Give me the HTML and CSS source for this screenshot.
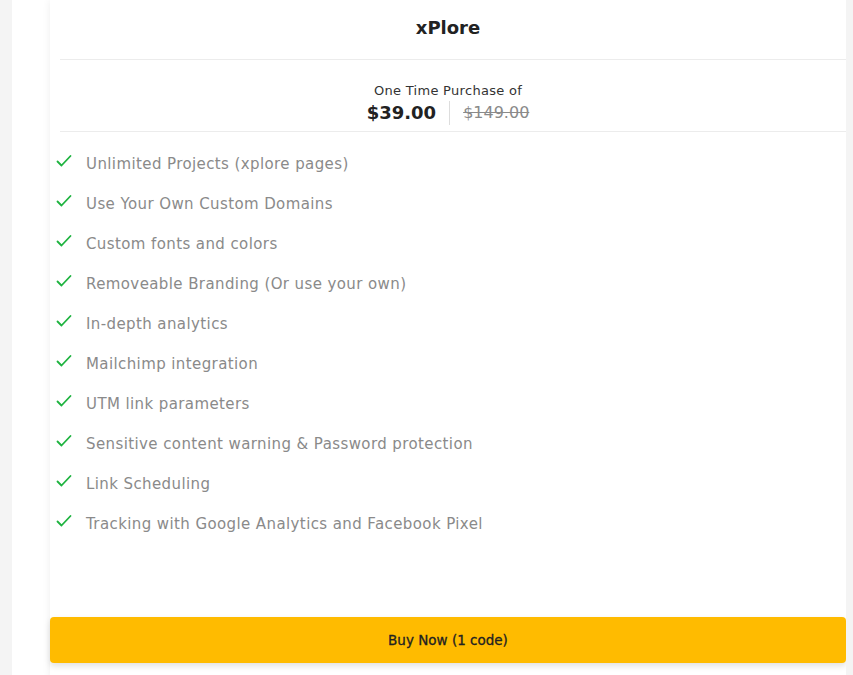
FILE: index.html
```html
<!DOCTYPE html>
<html lang="en">
<head>
  <meta charset="UTF-8" />
  <title>xPlore - Pricing</title>
  <meta name="viewport" content="width=device-width, initial-scale=1.0" />
  <link rel="stylesheet" href="styles.css">
</head>
<body>
  <div class="page">
    <div class="card">
      <h2 class="plan-title">xPlore</h2>
      <div class="price-box">
        <div class="price-label">One Time Purchase of</div>
        <div class="price-row">
          <span class="price">$39.00</span>
          <span class="old-price">$149.00</span>
        </div>
      </div>
      <ul class="features" id="features"></ul>
      <button class="buy">Buy Now (1 code)</button>
    </div>
  </div>

  <script>
    const features = [
      "Unlimited Projects (xplore pages)",
      "Use Your Own Custom Domains",
      "Custom fonts and colors",
      "Removeable Branding (Or use your own)",
      "In-depth analytics",
      "Mailchimp integration",
      "UTM link parameters",
      "Sensitive content warning & Password protection",
      "Link Scheduling",
      "Tracking with Google Analytics and Facebook Pixel"
    ];

    const listEl = document.getElementById("features");
    const check = '<svg class="check" viewBox="0 0 16 16" width="16" height="16"><polyline points="1.5,8.5 5.5,12.5 14.5,3" fill="none" stroke="#1db33f" stroke-width="1.8" stroke-linecap="round" stroke-linejoin="round"/></svg>';

    features.forEach(text => {
      const li = document.createElement("li");
      li.innerHTML = check + '<span></span>';
      li.querySelector("span").textContent = text;
      listEl.appendChild(li);
    });
  </script>
</body>
</html>
```

FILE: styles.css
```css
body {
  margin: 0;
  background: #f4f4f4;
  font-family: 'DejaVu Sans', sans-serif;
  color: #222;
}

.page {
  margin-left: 12px;
  width: 834px;
  height: 675px;
  background: #fff;
  padding-left: 38px;
  box-sizing: border-box;
  overflow: hidden;
}

.card {
  width: 796px;
  height: 680px;
  background: #fff;
  box-shadow: 0 0 8px rgba(0, 0, 0, 0.07);
  display: flex;
  flex-direction: column;
}

.plan-title {
  margin: 0 0 0 10px;
  height: 59px;
  line-height: 55px;
  text-align: center;
  font-size: 18px;
  font-weight: 700;
  color: #222;
  border-bottom: 1px solid #ececec;
  padding-right: 10px;
}

.price-box {
  margin-left: 10px;
  height: 72px;
  border-bottom: 1px solid #ececec;
  text-align: center;
  padding-right: 10px;
  box-sizing: border-box;
  padding-top: 22px;
}

.price-label {
  font-size: 13px;
  letter-spacing: 0.3px;
  color: #333;
  line-height: 18px;
}

.price-row {
  display: flex;
  justify-content: center;
  align-items: center;
  line-height: 24px;
  margin-top: 1px;
}

.price {
  font-size: 18px;
  font-weight: 700;
  color: #222;
  padding-right: 13px;
  border-right: 1px solid #ddd;
}

.old-price {
  font-size: 16px;
  color: #8a8a8a;
  text-decoration: line-through;
  padding-left: 13px;
}

.features {
  list-style: none;
  margin: 0;
  padding: 14px 0 0 6px;
  flex: 1;
}

.features li {
  display: flex;
  align-items: flex-start;
  height: 40px;
  font-size: 15px;
  letter-spacing: 0.4px;
  color: #8a8a8a;
  line-height: 36px;
}

.check {
  margin-top: 7px;
  margin-right: 14px;
  flex-shrink: 0;
}

.buy {
  margin-bottom: 17px;
  height: 46px;
  border: none;
  border-radius: 4px;
  background: #ffbb00;
  color: #222;
  font-family: 'DejaVu Sans', sans-serif;
  font-size: 13.5px;
  -webkit-text-stroke: 0.3px #222;
  cursor: pointer;
  box-shadow: 0 3px 6px rgba(0, 0, 0, 0.12);
}
```
